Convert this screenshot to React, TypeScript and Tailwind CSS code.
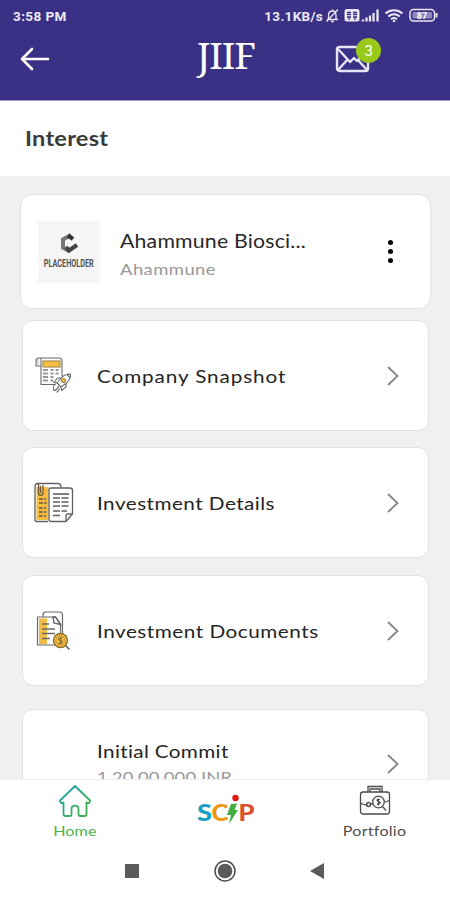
import type { ReactNode } from 'react';

interface MenuCardProps {
  icon: ReactNode;
  label: string;
  labelClassName: string;
  className?: string;
}

function StatusIcons(): JSX.Element {
  return (
    <svg width="113" height="18" viewBox="0 0 113 18" fill="none" stroke="#e9e7f6" strokeWidth="1.3">
      <path d="M1 12.500h11M2.500 12V8.500C2.500 5.500 4 4 6.500 4S10 5.500 10 8.500V12M5 14.500h3M.5 14.500L12 2.500M6.500 2.500v1.500" />
      <rect x="18.500" y="2" width="15" height="12.500" rx="2.500" fill="#e9e7f6" stroke="none" />
      <path d="M21 5.500h4M27 5.500h4M21 7.500h4M27 7.500h4M21 10h4M27 10h4M23 10v3M29 10v3" stroke="#3b3085" />
      <path d="M37 14.500v-2M40.500 14.500v-4M44 14.500V8.500M47.500 14.500V6M51.500 14.500V2.500" strokeWidth="2.300" />
      <path d="M59.500 6.500c5-4.300 12-4.300 17 0M62.300 9.500c3.500-2.900 8-2.900 11.400 0M65 12.300c1.900-1.500 4.200-1.500 6 0" strokeWidth="2" />
      <circle cx="68" cy="14" r="1.300" fill="#e9e7f6" stroke="none" />
      <rect x="84" y="2.500" width="24.500" height="11.500" rx="3.500" strokeWidth="1.500" />
      <rect x="86.500" y="5" width="19.500" height="6.500" rx="1" fill="#8f88bd" stroke="none" />
      <path d="M110.500 6v4.500" strokeWidth="2" />
      <text x="96" y="11.800" textAnchor="middle" fontSize="9" fontWeight="700" fontFamily="Roboto, sans-serif" fill="#ffffff" stroke="none">
        87
      </text>
    </svg>
  );
}

function ChevronIcon(): JSX.Element {
  return (
    <svg width="14" height="22" viewBox="0 0 14 22" fill="none" stroke="#858585" strokeWidth="1.8">
      <path d="M2 2l9.500 9L2 20" />
    </svg>
  );
}

function SnapshotIcon(): JSX.Element {
  return (
    <svg width="44" height="44" viewBox="0 0 44 44" fill="none" stroke="#6b6b6b" strokeWidth="1.1">
      <path d="M8 4H5.500C3.500 4 3 5 3 7v5h5M6 4h20c2 0 3 1 3 3v15M8 4v26.500h14.500" />
      <path d="M5 5v6" stroke="#bbb" />
      <rect x="10" y="7" width="17" height="6" fill="#f5bf45" stroke="#a48445" />
      <path d="M10 16h5M17.500 16h3M22.500 16h3M10 19.500h5M17.500 19.500h3M22.500 19.500h3M10 23h5M17.500 23h3M10 26.500h5M17.500 26.500h3" stroke="#999" strokeWidth="1.8" />
      <path d="M24 29l4.500-5.500c3-3 6-3.600 9-3.500.1 3-.8 6-4 9l-5.500 4zM24 29l-3-.5 3.500-4.500h4M28 33l.5 3.500L33 33v-4M24 29l4 4M34 20.500l3 3" fill="#fff" />
      <circle cx="30.500" cy="26.500" r="2" fill="#f5bf45" stroke="#a48445" />
      <path d="M22.500 30c-2 1-2.500 4-1.500 6.500 2-.2 3.500-1 4.500-4.500M26.500 34.500c-.5 2-1 3-3 4" />
    </svg>
  );
}

function DetailsIcon(): JSX.Element {
  return (
    <svg width="44" height="44" viewBox="0 0 44 44" fill="none" stroke="#606060" strokeWidth="1.300">
      <path d="M15 40.500H4c-1.500 0-2-.5-2-2V6c0-2 .5-3.500 3-3.500h20c2 0 3 1 3 4" fill="#fff" />
      <path d="M3.500 6h12v33h-12z" fill="#f5bc42" stroke="none" />
      <path d="M5.500 3v9c0 3 4.500 3 4.500 0V4M7.500 5v7" stroke="#6d5a32" />
      <path d="M6 18h7M6 22h7.500M6 27h7M6 31h7.500M6 35h7" stroke="#6d5a32" strokeWidth="1.600" strokeDasharray="4 1" />
      <path d="M16 9c0-1.500.5-2 2-2h19c1.800 0 2.500.8 2.500 2.500V33L33 40.500H18c-1.500 0-2-.5-2-2z" fill="#fff" />
      <path d="M33 40v-5c0-1.500.5-2 2-2h4.500" />
      <path d="M20 13h16" strokeWidth="1.600" />
      <path d="M20 17h16M20 21h16M20 25h16M20 30h14M20 34.500h8" strokeWidth="1.500" strokeDasharray="7 1.500" />
    </svg>
  );
}

function DocumentsIcon(): JSX.Element {
  return (
    <svg width="44" height="44" viewBox="0 0 44 44" fill="none" stroke="#696969" strokeWidth="1.200">
      <path d="M10 8V6c0-2 .8-3 2.500-3h14c2 0 3 1 3 3v23" />
      <path d="M4.500 8h18l5 7v21h-23z" fill="#fff" />
      <path d="M6 9.500h8V35H6z" fill="#f5bc42" stroke="none" />
      <path d="M20 8l1 6 6.500 1.500-5-7.500z" fill="#fff" strokeWidth="1.500" />
      <path d="M9 15h7M9 20h13M9 24.500h13M9 29.500h8" strokeWidth="1.500" />
      <circle cx="27.500" cy="31.500" r="7" fill="#f5bc42" stroke="#8c6b2b" strokeWidth="1.400" />
      <circle cx="27.500" cy="31.500" r="4.600" stroke="#b4862f" strokeWidth=".8" />
      <path d="M29.500 29h-2c-2.500 0-2 2.300 0 2.500s2.500 2.800 0 2.800h-2M27.500 28v7" stroke="#8c6b2b" />
      <path d="M32.500 36.500l4 4" strokeWidth="1.700" />
    </svg>
  );
}

function MenuCard({ icon, label, labelClassName, className = '' }: MenuCardProps): JSX.Element {
  return (
    <div className={`ml-[22px] mr-[21px] flex h-[111px] shrink-0 items-center rounded-[11px] border border-[#e2e2e2] bg-white pl-[10px] pr-[28px] ${className}`}>
      <div className="w-[64px]">{icon}</div>
      <div className="flex-1">
        <p className={`w-max origin-left scale-x-[1.15] whitespace-nowrap text-[18px] leading-[28px] text-[#242424] ${labelClassName}`}>{label}</p>
      </div>
      <ChevronIcon />
    </div>
  );
}

export default function App(): JSX.Element {
  return (
    <div className="flex h-[900px] w-[450px] flex-col overflow-hidden bg-white font-[Lato,sans-serif]">
      <header className="h-[100px] shrink-0 bg-[#3a3085] text-white">
        <div className="flex h-8 items-center justify-between pl-[13px] pr-[11px] font-[Roboto,sans-serif] text-[13.5px] font-bold text-[#eceaf7]">
          <span className="tracking-[0.4px]">3:58 PM</span>
          <div className="flex items-center gap-[3px]">
            <span className="tracking-[0.3px]">13.1KB/s</span>
            <StatusIcons />
          </div>
        </div>
        <div className="flex h-[54px] items-center pl-[19px] pr-[67px]">
          <svg width="32" height="26" viewBox="0 0 32 26" fill="none" stroke="#fff" strokeWidth="2.600" strokeLinecap="round" strokeLinejoin="round">
            <path d="M29 13H3M13 3L3 13l10 10" />
          </svg>
          <h1 className="ml-[146px] w-[59px] whitespace-nowrap pb-[9px] font-['Noto_Serif','Liberation_Serif',serif] text-[37px] leading-[45px] tracking-[-1px]">JIIF</h1>
          <div className="ml-auto flex pb-[7px]">
            <svg width="48" height="38" viewBox="0 0 48 38" fill="none" stroke="#e9e7f6" strokeWidth="2.400" strokeLinejoin="round">
              <rect x="2" y="10" width="31" height="24" rx="2.500" />
              <path d="M3 12l12 13 4-4 3 3 10-10M3 33l10-11M32 33l-9-10" />
              <circle cx="33.500" cy="13.500" r="12.500" fill="#98c91b" stroke="none" />
              <text x="33.500" y="18.500" textAnchor="middle" fontSize="14" fontFamily="Inter, sans-serif" fill="#fff" stroke="none">
                3
              </text>
            </svg>
          </div>
        </div>
      </header>

      <div className="flex h-[76px] shrink-0 items-center border-t border-[#9d97c2] bg-white pl-[25px]">
        <h2 className="origin-left scale-x-[1.15] text-[20.5px] font-bold tracking-[0.2px] text-[#3a3a3a]">Interest</h2>
      </div>

      <main className="flex h-[603px] shrink-0 flex-col overflow-hidden bg-[#f0f0f0] pt-[18px]">
        <div className="ml-[20px] mr-[19px] flex h-[115px] shrink-0 items-center rounded-[12px] border border-[#e2e2e2] bg-white pl-[17px] pr-[36px]">
          <div className="flex h-[62px] w-[62px] flex-col items-center bg-[#f6f6f6] pt-[11px]">
            <svg width="20" height="22" viewBox="0 0 20 22" fill="none">
              <path d="M12 3L4 7.500v8L10 19" stroke="#777" strokeWidth="4" />
              <path d="M9 3.500l5 3.500" stroke="#333" strokeWidth="4" />
              <path d="M7 15l3 3.500 8-5.500" stroke="#444" strokeWidth="4" />
            </svg>
            <span className="mt-px scale-x-[0.66] font-[Roboto,sans-serif] text-[11px] font-bold leading-[18px] text-[#555]">PLACEHOLDER</span>
          </div>
          <div className="ml-[20px] flex-1 whitespace-nowrap pt-[6px]">
            <p className="w-max origin-left scale-x-[1.15] text-[18.5px] leading-[28px] tracking-[0.17px] text-[#282828]">Ahammune Biosci...</p>
            <p className="w-max origin-left scale-x-[1.15] text-[16px] leading-[27px] tracking-[0.4px] text-[#999]">Ahammune</p>
          </div>
          <div className="flex w-[6px] flex-col gap-[4px]">
            <span className="h-[5px] w-[5px] rounded-full bg-black" />
            <span className="h-[5px] w-[5px] rounded-full bg-black" />
            <span className="h-[5px] w-[5px] rounded-full bg-black" />
          </div>
        </div>

        <MenuCard icon={<SnapshotIcon />} label="Company Snapshot" labelClassName="tracking-[0.78px]" className="mt-[11px]" />
        <MenuCard icon={<DetailsIcon />} label="Investment Details" labelClassName="tracking-[0.4px]" className="mt-[16px]" />
        <MenuCard icon={<DocumentsIcon />} label="Investment Documents" labelClassName="tracking-[0.45px]" className="mt-[17px]" />

        <div className="ml-[22px] mr-[21px] mt-[23px] flex h-[111px] shrink-0 items-center rounded-[11px] border border-[#e2e2e2] bg-white pb-[2px] pl-[74px] pr-[28px]">
          <div className="flex-1 whitespace-nowrap">
            <p className="w-max origin-left scale-x-[1.15] text-[18px] leading-[26px] tracking-[0.3px] text-[#242424]">Initial Commit</p>
            <p className="w-max origin-left scale-x-[1.15] text-[16px] leading-[26px] tracking-[0.1px] text-[#999]">1,20,00,000 INR</p>
          </div>
          <ChevronIcon />
        </div>
      </main>

      <nav className="flex h-[66px] shrink-0 border-t border-[#eee] bg-white">
        <div className="flex w-[150px] flex-col items-center pt-[4px]">
          <svg width="34" height="34" viewBox="0 0 34 34" fill="none" stroke="url(#home)" strokeWidth="1.800" strokeLinejoin="round">
            <defs>
              <linearGradient id="home" x1="0" y1="0" x2="1" y2="1">
                <stop stopColor="#16a7b8" />
                <stop offset="1" stopColor="#4cae3e" />
              </linearGradient>
            </defs>
            <path d="M17 2L2 16.500c-.5 2.500 1.500 3 3.500 2V30c0 1.500.5 2 2 2H12c1 0 1.500-.5 1.500-1.500V25c0-4.500 7-4.500 7 0v5.500c0 1 .5 1.500 1.500 1.500h4.500c1.500 0 2-.5 2-2V18.500c2 1 4 .5 3.500-2z" />
          </svg>
          <span className="scale-x-[1.15] text-[14px] leading-[25px] tracking-[0.1px] text-[#4eb34d]">Home</span>
        </div>
        <div className="flex w-[150px] justify-center pt-[11px]">
          <svg width="60" height="38" viewBox="0 0 60 38" fontFamily="Lato, sans-serif" fontSize="23" fontWeight="900">
            <text x="2" y="30" textLength="15" lengthAdjust="spacingAndGlyphs" fill="#189fc7">S</text>
            <text x="16.500" y="30" textLength="17" lengthAdjust="spacingAndGlyphs" fill="#ec9813">C</text>
            <path d="M36 13l6-.5-2.500 6.500h3.500L34 33l2-9h-4z" fill="#42ad3f" />
            <circle cx="40.500" cy="7" r="3.200" fill="#e21713" />
            <text x="43.500" y="30" textLength="16" lengthAdjust="spacingAndGlyphs" fill="#d9502b">P</text>
          </svg>
        </div>
        <div className="flex w-[150px] flex-col items-center pt-[4px]">
          <svg width="34" height="34" viewBox="0 0 34 34" fill="none" stroke="#4b4b4b" strokeWidth="1.300">
            <rect x="2.500" y="8" width="29" height="22" rx="2.500" />
            <path d="M10 8V2.500h14V8M12 8V5h10v3M2.500 19c2 1.500 4 2 7 2M12 20h3M27 18l4.500-1.500" />
            <circle cx="10.500" cy="20.500" r="2" />
            <circle cx="20.500" cy="18" r="5.800" fill="#fff" />
            <path d="M22 15.500c-3-1-4 1-1.500 2s2 3-1.500 2.500M20.500 14.500v7M24.500 22.500l3.500 4" />
          </svg>
          <span className="scale-x-[1.15] text-[14px] leading-[25px] tracking-[0.2px] text-[#4d4d4d]">Portfolio</span>
        </div>
      </nav>

      <footer className="flex h-[55px] items-center bg-white pb-[3px] pl-[124px]">
        <svg width="202" height="24" viewBox="0 0 202 24">
          <path d="M1 5h14v14H1z" fill="#5b5b5b" />
          <circle cx="101" cy="12" r="10" fill="#fff" stroke="#4e4e4e" strokeWidth="1.500" />
          <circle cx="101" cy="12" r="7.300" fill="#5b5b5b" />
          <path d="M200 4v16l-14-8z" fill="#5b5b5b" />
        </svg>
      </footer>
    </div>
  );
}
